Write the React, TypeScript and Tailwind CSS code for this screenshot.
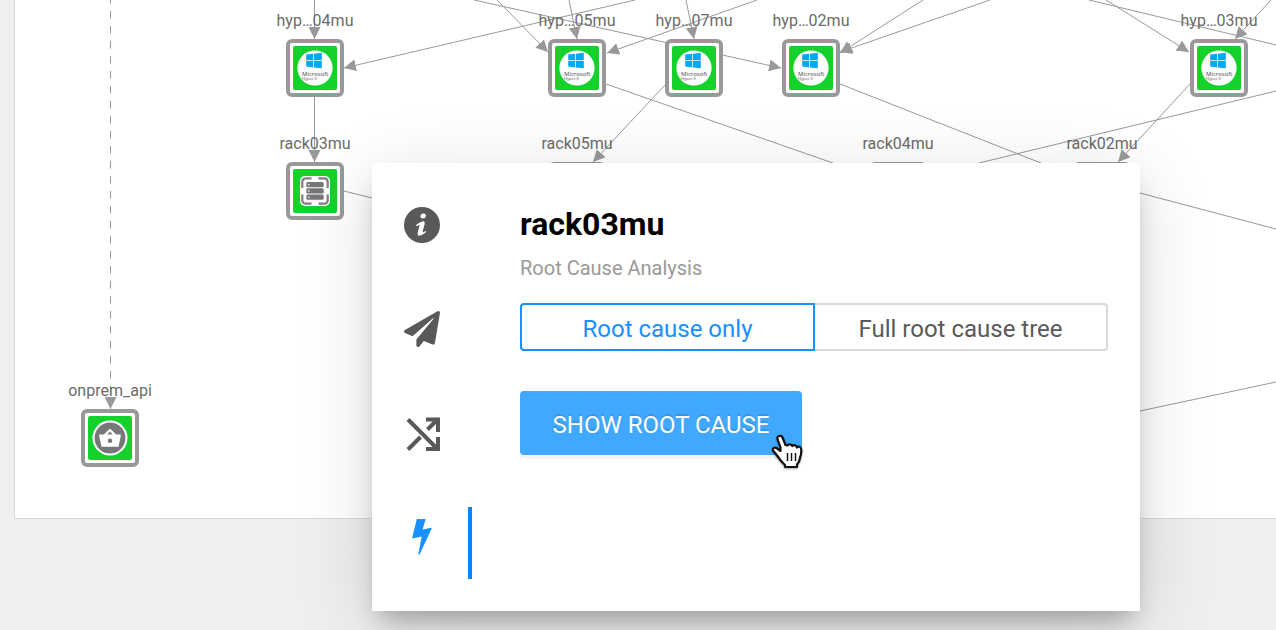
import { useState } from "react";
import type { ReactNode } from "react";
import { FaPaperPlane } from "react-icons/fa";

type Point = [number, number];
type IconKind = "hyperv" | "rack" | "basket";

const nodes: { id: string; label: string; x: number; y: number; icon: IconKind }[] = [
  { id: "h04", label: "hyp…04mu", x: 271, y: 39, icon: "hyperv" },
  { id: "h05", label: "hyp…05mu", x: 533, y: 39, icon: "hyperv" },
  { id: "h07", label: "hyp…07mu", x: 650, y: 39, icon: "hyperv" },
  { id: "h02", label: "hyp…02mu", x: 767, y: 39, icon: "hyperv" },
  { id: "h03", label: "hyp…03mu", x: 1175, y: 39, icon: "hyperv" },
  { id: "r03", label: "rack03mu", x: 271, y: 162, icon: "rack" },
  { id: "r05", label: "rack05mu", x: 533, y: 162, icon: "rack" },
  { id: "r04", label: "rack04mu", x: 854, y: 162, icon: "rack" },
  { id: "r02", label: "rack02mu", x: 1058, y: 162, icon: "rack" },
  { id: "api", label: "onprem_api", x: 66, y: 409, icon: "basket" },
];

const edges: { from: Point; to: Point; arrow?: boolean }[] = [
  { from: [299.5, 0], to: [299.5, 39], arrow: true },
  { from: [299.5, 97], to: [299.5, 162], arrow: true },
  { from: [620, 0], to: [329, 68], arrow: true },
  { from: [482, 0], to: [533, 52], arrow: true },
  { from: [554, 0], to: [562, 39], arrow: true },
  { from: [742, 0], to: [592, 53], arrow: true },
  { from: [459, 0], to: [766, 68], arrow: true },
  { from: [671, 0], to: [679, 39], arrow: true },
  { from: [908, 0], to: [825, 53], arrow: true },
  { from: [975, 0], to: [825, 52], arrow: true },
  { from: [1091, 0], to: [1174, 52], arrow: true },
  { from: [1074, 0], to: [1261, 45] },
  { from: [1256, 0], to: [1220, 39], arrow: true },
  { from: [591, 84], to: [818, 163] },
  { from: [650, 85], to: [578, 162], arrow: true },
  { from: [825, 84], to: [1026, 163] },
  { from: [1175, 84], to: [1103, 162], arrow: true },
  { from: [1261, 91], to: [964, 163] },
  { from: [329, 191], to: [357, 198] },
  { from: [1125, 193], to: [1261, 229] },
  { from: [1125, 411], to: [1261, 382] },
];

function HyperVIcon() {
  return (
    <svg viewBox="0 0 44 44" className="size-11" role="img" aria-label="Hyper-V">
      <circle cx="22" cy="22" r="17.6" fill="#fff" />
      <path d="M13.2 8.6 20.2 7.8V14.2H13.2zM21 7.7 28.8 6.8V14.2H21zM13.2 15H20.2V21.4L13.2 20.6zM21 15H28.8V22.3L21 21.5z" fill="#00a8fa" />
      <g fill="#444" fontFamily="Open Sans, sans-serif">
        <text x="9" y="30" fontSize="6">Microsoft</text>
        <text x="9" y="34" fontSize="4">Hyper-V</text>
      </g>
    </svg>
  );
}

function RackIcon() {
  return (
    <svg viewBox="0 0 44 44" className="size-11" fill="none" aria-hidden="true">
      <rect x="7" y="7" width="30" height="30" rx="5" fill="#fff" />
      <path
        d="M9.3 19V13Q9.3 9.3 13 9.3H18.5M25.5 9.3H31Q34.7 9.3 34.7 13V19M34.7 25.5V31Q34.7 34.7 31 34.7H25.5M18.5 34.7H13Q9.3 34.7 9.3 31V25.5"
        stroke="#808080"
        strokeWidth="2.2"
      />
      <g fill="#777">
        <rect x="13.3" y="13" width="17.4" height="5.2" rx="1.5" />
        <rect x="13.3" y="19.3" width="17.4" height="5.2" rx="1.5" />
        <rect x="13.3" y="25.6" width="17.4" height="5.2" rx="1.5" />
      </g>
      <g fill="#fff">
        <circle cx="15.8" cy="15.6" r="0.8" />
        <circle cx="15.8" cy="21.9" r="0.8" />
        <circle cx="15.8" cy="28.2" r="0.8" />
      </g>
    </svg>
  );
}

function BasketIcon() {
  return (
    <svg viewBox="0 0 44 44" className="size-11" aria-hidden="true">
      <circle cx="22" cy="22" r="17.5" fill="#fff" />
      <circle cx="22" cy="22" r="15.4" fill="#777" />
      <path
        d="M11.3 18.6H15.8L22 12.4 28.2 18.6H32.7V20.5L30.5 30.8H13.5L11.3 20.5zM19.3 18.6H24.7L22 15.4z"
        fill="#fff"
        fillRule="evenodd"
      />
      <circle cx="22" cy="24.8" r="2.2" fill="#777" />
    </svg>
  );
}

const nodeIcons: Record<IconKind, ReactNode> = {
  hyperv: <HyperVIcon />,
  rack: <RackIcon />,
  basket: <BasketIcon />,
};

function InfoIcon() {
  return (
    <svg viewBox="0.4 0.4 19.2 19.2" className="size-9" fill="currentColor" aria-hidden="true">
      <path
        fillRule="evenodd"
        d="M10 .4A9.6 9.6 0 1 0 10 19.6 9.6 9.6 0 1 0 10 .4zM10.896 3.866c.936 0 1.211.543 1.211 1.164 0 .775-.62 1.492-1.679 1.492-.886 0-1.308-.445-1.282-1.182 0-.621.519-1.474 1.75-1.474zM8.498 15.75c-.64 0-1.107-.389-.66-2.094l.733-3.025c.127-.484.148-.678 0-.678-.191 0-1.022.334-1.512.664l-.319-.523c1.555-1.299 3.343-2.061 4.108-2.061.64 0 .746.756.427 1.92l-.84 3.18c-.149.562-.085.756.064.756.192 0 .82-.232 1.438-.719l.362.486c-1.513 1.512-3.162 2.094-3.801 2.094z"
      />
    </svg>
  );
}

function ShuffleIcon() {
  return (
    <svg viewBox="0 0 36 36" className="size-9" fill="none" stroke="currentColor" strokeWidth="4" aria-hidden="true">
      <path d="M4 4.5 33 33.500M4 34.500 16.500 22M23.500 14.500 34 4" />
      <path d="M22 4.500H34V17M22 34H34V22" />
    </svg>
  );
}

function BoltIcon() {
  return (
    <svg viewBox="0 0 36 36" className="size-9" fill="currentColor" aria-hidden="true">
      <path d="M12.8 0H21.6L18.6 10.6 27.2 8.8 27.7 9.5 15.6 35.6 14.2 35.8 17.7 17.4 8 19.5z" />
    </svg>
  );
}

function Cursor() {
  return (
    <svg
      viewBox="0 0 34 38"
      className="pointer-events-none absolute -right-0.5 -bottom-4 h-[38px] w-[34px] drop-shadow-[0_1px_1px_rgba(0,0,0,0.35)]"
      aria-hidden="true"
    >
      <path
        d="M9.5 3C7.700 3.200 7 4.500 7.500 6L10.500 14.500V18L6.500 15C4.500 14 2.500 15 3 17.500L7 22.500 11.500 28.500 15 32V34H27V31.500Q29.500 29 30 25Q31.500 21 31.300 16.500C31 13.500 28 13 27 14.500C26.500 12 23.500 11.500 22.300 13C21.500 11 18.500 10.800 17.300 12.500L15.500 12 12.500 4.500C12 3.300 11 2.800 9.500 3z"
        fill="#fff"
        stroke="#111"
        strokeWidth="2.2"
        strokeLinejoin="round"
      />
      <path d="M17.500 20V28M21.500 20V28M25.500 20V28" stroke="#111" strokeWidth="1.5" />
    </svg>
  );
}

const tabs: { id: string; label: string; icon: ReactNode }[] = [
  { id: "info", label: "Details", icon: <InfoIcon /> },
  { id: "send", label: "Send", icon: <FaPaperPlane className="size-9" /> },
  { id: "paths", label: "Paths", icon: <ShuffleIcon /> },
  { id: "cause", label: "Root cause", icon: <BoltIcon /> },
];

function Topology() {
  return (
    <section className="relative ml-3.5 h-[519px] overflow-hidden border-b border-l border-[#d9d9d9] bg-white">
      <svg className="absolute top-0 left-0 h-[518px] w-[1261px]" viewBox="0 0 1261 518" stroke="#999" fill="none" aria-hidden="true">
        <defs>
          <marker id="arrow" markerUnits="userSpaceOnUse" markerWidth="12" markerHeight="12" refX="12" refY="6" orient="auto">
            <path d="M0 0 12 6 0 12z" fill="#999" stroke="none" />
          </marker>
        </defs>
        {edges.map(({ from, to, arrow }, i) => (
          <line key={i} x1={from[0]} y1={from[1]} x2={to[0]} y2={to[1]} markerEnd={arrow ? "url(#arrow)" : undefined} />
        ))}
        <line x1="95.5" y1="0" x2="95.5" y2="409" strokeDasharray="7.5 7.5" strokeDashoffset="4" markerEnd="url(#arrow)" />
      </svg>
      {nodes.map((n) => (
        <div key={n.id} className="absolute flex w-[58px] flex-col items-center" style={{ left: n.x, top: n.y - 28 }}>
          <span className="h-7 text-base leading-5 whitespace-nowrap text-[#6b6b6b]">{n.label}</span>
          <div className="rounded-md border-4 border-[#999] bg-white p-[3px]">
            <div className="rounded-xs bg-[#14d22b]">{nodeIcons[n.icon]}</div>
          </div>
        </div>
      ))}
    </section>
  );
}

function RootCausePanel() {
  const [tab, setTab] = useState("cause");
  const [full, setFull] = useState(false);
  return (
    <aside className="absolute top-[163px] left-[372px] flex w-[768px] bg-white shadow-[0_16px_72px_rgba(0,0,0,0.14),0_16px_24px_-8px_rgba(0,0,0,0.28)]">
      <nav className="flex w-[100px] flex-col gap-8 py-8">
        {tabs.map((t) => (
          <button
            key={t.id}
            type="button"
            aria-label={t.label}
            onClick={() => setTab(t.id)}
            className={
              t.id === tab
                ? "flex h-[72px] items-center justify-center border-x-4 border-l-transparent border-r-[#0a84ff] pb-3 text-[#1890ff]"
                : "flex h-[72px] items-center justify-center border-x-4 border-transparent pb-3 text-[#595959]"
            }
          >
            {t.icon}
          </button>
        ))}
      </nav>
      <div className="flex-1 pt-[41px] pr-8 pl-12">
        <h1 className="text-[32px] leading-10 font-bold text-black">rack03mu</h1>
        <p className="mt-2 text-xl leading-8 text-[#999]">Root Cause Analysis</p>
        <div className="mt-[19px] flex h-12 text-2xl">
          <button
            type="button"
            aria-pressed={!full}
            onClick={() => setFull(false)}
            className="flex-1 rounded-l-sm border-2 border-[#1890ff] pt-1 text-[#1890ff]"
          >
            Root cause only
          </button>
          <button
            type="button"
            aria-pressed={full}
            onClick={() => setFull(true)}
            className="flex-1 rounded-r-sm border-2 border-l-0 border-[#d9d9d9] pt-1 text-[#595959]"
          >
            Full root cause tree
          </button>
        </div>
        <div className="relative mt-10 w-[282px]">
          <button
            type="button"
            className="h-16 w-full rounded-sm bg-[#40a9ff] pt-1 text-2xl text-white shadow-[0_4px_0_rgba(0,0,0,0.045)] [text-shadow:0_-2px_0_rgba(0,0,0,0.12)]"
          >
            SHOW ROOT CAUSE
          </button>
          <Cursor />
        </div>
      </div>
    </aside>
  );
}

export default function App() {
  return (
    <main className="relative min-h-screen overflow-hidden bg-[#efefef] font-[Roboto,sans-serif]">
      <Topology />
      <RootCausePanel />
    </main>
  );
}
